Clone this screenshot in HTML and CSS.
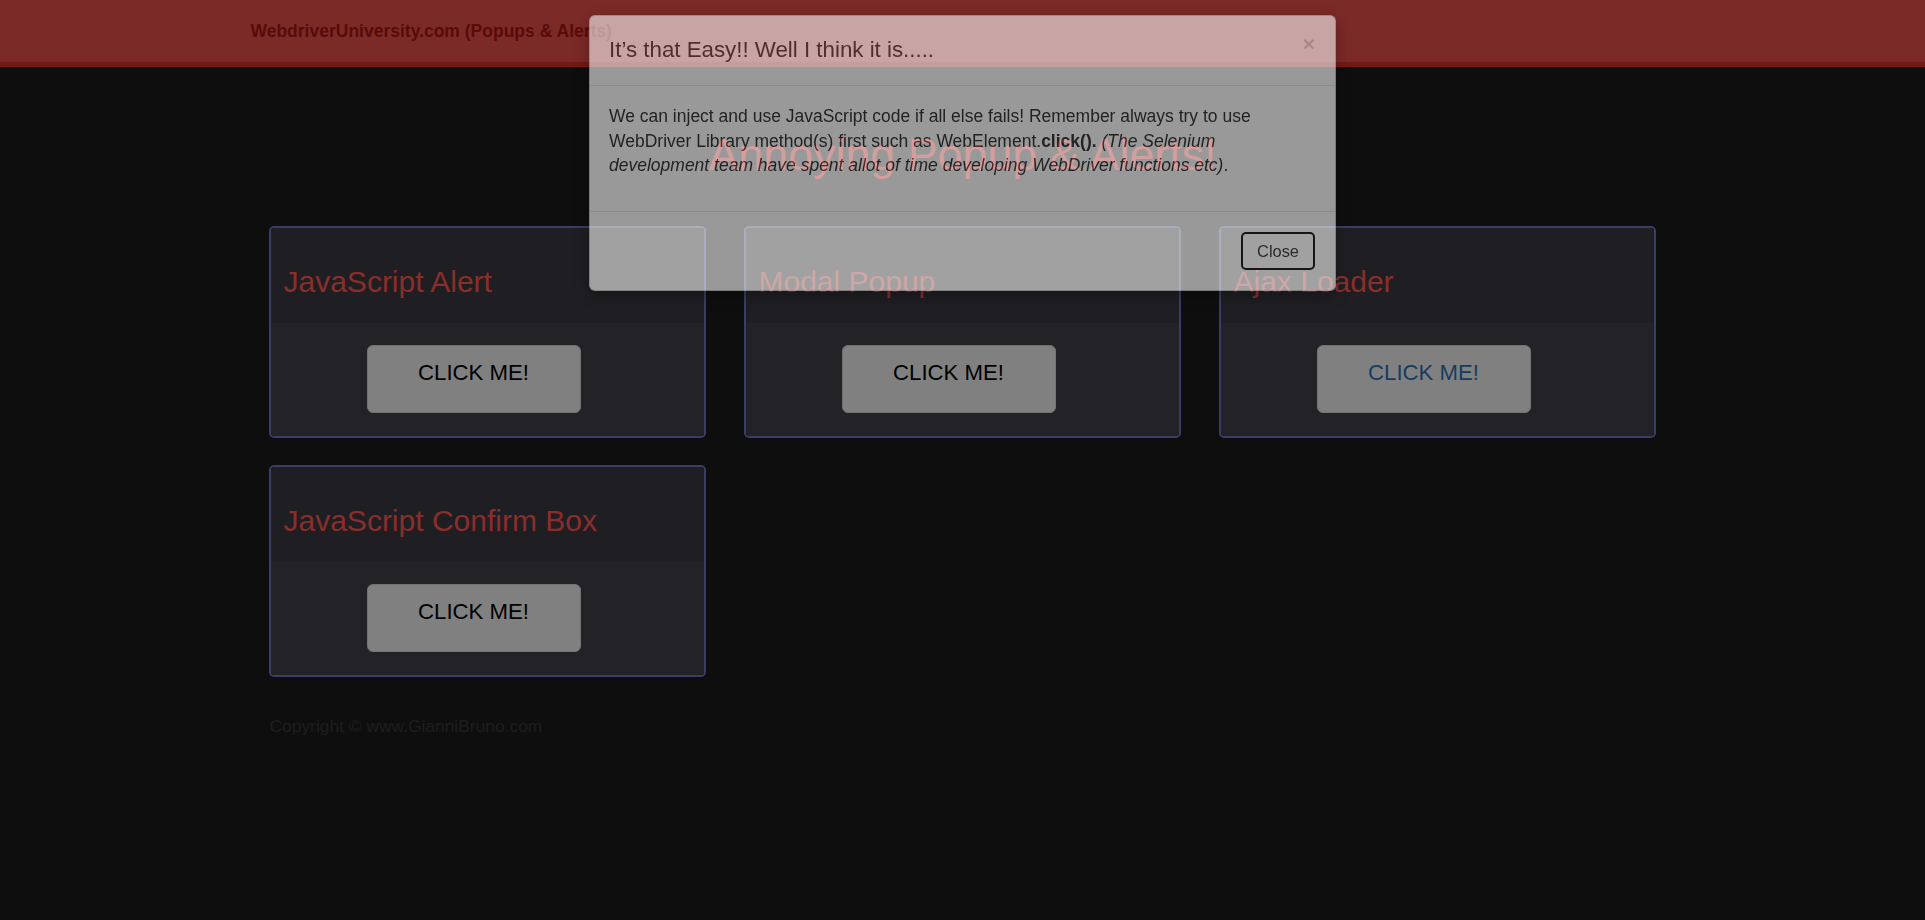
FILE: index.html
```html
<!DOCTYPE html>
<html lang="en">
<head>
<meta charset="utf-8">
<title>WebDriver | Popups &amp; Alerts</title>
<link rel="stylesheet" href="styles.css">
</head>
<body>
<nav class="navbar">
  <div class="container">
    <a class="brand" href="#">WebdriverUniversity.com (Popups &amp; Alerts)</a>
  </div>
</nav>

<main class="container">
  <h1 class="page-title">Annoying Popup &amp; Alerts!</h1>

  <div class="cards">
    <section class="card">
      <div class="card-head"><h2>JavaScript Alert</h2></div>
      <div class="card-body"><span class="btn-click">CLICK ME!</span></div>
    </section>
    <section class="card">
      <div class="card-head"><h2>Modal Popup</h2></div>
      <div class="card-body"><span class="btn-click">CLICK ME!</span></div>
    </section>
    <section class="card">
      <div class="card-head"><h2>Ajax Loader</h2></div>
      <div class="card-body"><a class="btn-click link" href="#">CLICK ME!</a></div>
    </section>
    <section class="card">
      <div class="card-head"><h2>JavaScript Confirm Box</h2></div>
      <div class="card-body"><span class="btn-click">CLICK ME!</span></div>
    </section>
  </div>

  <footer class="copyright">Copyright © www.GianniBruno.com</footer>
</main>

<div class="modal">
  <div class="modal-content">
    <div class="modal-header">
      <h4 class="modal-title">It’s that Easy!! Well I think it is.....</h4>
      <span class="close">×</span>
    </div>
    <div class="modal-body">
      <p>We can inject and use JavaScript code if all else fails! Remember always try to use WebDriver Library method(s) first such as WebElement.<b>click().</b> <i>(The Selenium development team have spent allot of time developing WebDriver functions etc)</i>.</p>
    </div>
    <div class="modal-footer">
      <button class="btn-close" type="button">Close</button>
    </div>
  </div>
</div>
</body>
</html>
```

FILE: styles.css
```css
* { box-sizing: border-box; }

html, body {
  margin: 0;
  padding: 0;
}

body {
  background: #0e0e0e;
  font-family: "Liberation Sans", Arial, sans-serif;
  color: #333;
  min-height: 920px;
}

.container {
  width: 1424px;
  margin: 0 auto;
}

/* navbar */
.navbar {
  height: 67px;
  background: #7b2a28;
  border-bottom: 5px solid #731a16;
}
.navbar .container {
  height: 62px;
  display: flex;
  align-items: center;
}
.brand {
  font-weight: bold;
  font-size: 17.5px;
  color: #590b0a;
  text-decoration: none;
  padding-top: 1px;
}

/* heading */
.page-title {
  margin: 61px 0 46px;
  text-align: center;
  font-weight: normal;
  font-size: 44.8px;
  line-height: 52px;
  color: #931a18;
}

/* cards */
.cards {
  display: grid;
  grid-template-columns: repeat(3, 437px);
  column-gap: 38px;
  row-gap: 27px;
  padding-left: 18px;
}
.card {
  border: 2px solid #383e66;
  border-radius: 5px;
  overflow: hidden;
  height: 212px;
  display: flex;
  flex-direction: column;
}
.card-head {
  background: #1f1f23;
  height: 95px;
  padding: 37px 13px 0;
}
.card-head h2 {
  margin: 0;
  font-weight: normal;
  font-size: 30px;
  line-height: 34px;
  color: #8a2e2b;
  white-space: nowrap;
}
.card-body {
  flex: 1;
  background: #232327;
  padding: 22px 0 0 96px;
}
.btn-click {
  display: block;
  width: 214px;
  height: 68px;
  background: #808080;
  border: 1px solid #727272;
  border-radius: 6px;
  text-align: center;
  font-size: 22.2px;
  line-height: 25px;
  padding-top: 14px;
  color: #000;
  text-decoration: none;
}
.btn-click.link { color: #173c60; }

.copyright {
  margin-top: 39px;
  padding-left: 19px;
  font-size: 17.4px;
  color: #1e1e1e;
}

/* modal */
.modal {
  position: fixed;
  inset: 0;
  z-index: 10;
}
.modal-content {
  width: 747px;
  margin: 15px auto 0;
  background: #fff;
  border: 1px solid rgba(0,0,0,.2);
  border-radius: 6px;
  box-shadow: 0 5px 15px rgba(0,0,0,.5);
  opacity: 0.58;
}
.modal-header {
  position: relative;
  height: 70px;
  padding: 18px 19px 0;
  border-bottom: 1px solid #e5e5e5;
}
.modal-title {
  margin: 0;
  font-weight: normal;
  font-size: 22.3px;
  line-height: 31px;
  color: #333;
}
.close {
  position: absolute;
  top: 17px;
  right: 20px;
  font-size: 21px;
  line-height: 21px;
  font-weight: bold;
  color: #000;
  opacity: .2;
}
.modal-body {
  height: 126px;
  padding: 18px 19px 0;
  border-bottom: 1px solid #e5e5e5;
}
.modal-body p {
  margin: 0;
  font-size: 17.5px;
  line-height: 24.5px;
  color: #333;
}
.modal-footer {
  height: 78px;
  padding: 20px 20px 0;
  display: flex;
  justify-content: flex-end;
  align-items: flex-start;
}
.btn-close {
  width: 74px;
  height: 38px;
  font-family: "Liberation Sans", Arial, sans-serif;
  font-size: 16.4px;
  color: #333;
  background: #fff;
  border: 2px solid #111;
  border-radius: 5px;
  box-shadow: 0 0 0 2px rgba(255,255,255,.35);
  padding: 0;
}
```
